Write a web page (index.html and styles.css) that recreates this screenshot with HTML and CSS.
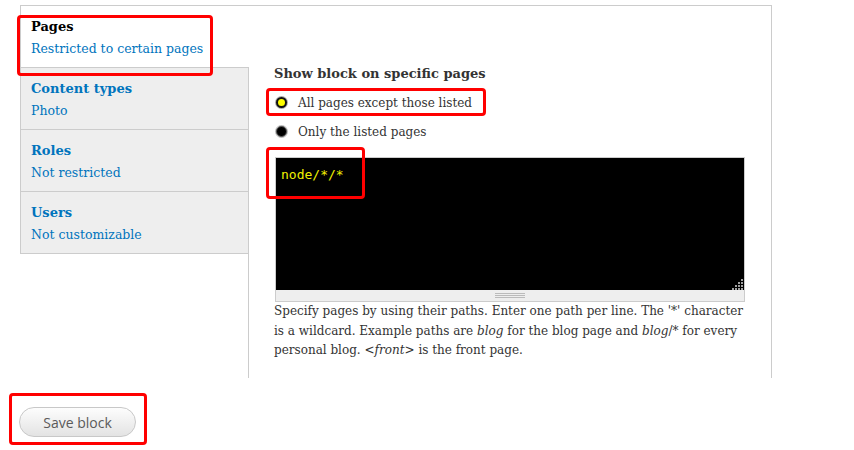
FILE: index.html
```html
<!DOCTYPE html>
<html>
<head>
<meta charset="utf-8">
<link rel="stylesheet" href="styles.css">
</head>
<body>
<div class="page">
  <div class="vtabs">
    <ul class="vt-menu">
      <li class="vt-item selected"><a class="vt-link" href="#"><strong class="vt-title">Pages</strong><span class="vt-summary">Restricted to certain pages</span></a></li>
      <li class="vt-item"><a class="vt-link" href="#"><strong class="vt-title">Content types</strong><span class="vt-summary">Photo</span></a></li>
      <li class="vt-item"><a class="vt-link" href="#"><strong class="vt-title">Roles</strong><span class="vt-summary">Not restricted</span></a></li>
      <li class="vt-item last"><a class="vt-link" href="#"><strong class="vt-title">Users</strong><span class="vt-summary">Not customizable</span></a></li>
    </ul>
    <div class="vt-pane">
      <div class="field-label">Show block on specific pages</div>
      <label class="radio-row"><span class="radio radio-yellow"></span>All pages except those listed</label>
      <label class="radio-row"><span class="radio radio-black"></span>Only the listed pages</label>
      <div class="textarea">
        <div class="ta-body">node/*/*<svg class="resize" width="12" height="12" viewBox="0 0 12 12"><g fill="#a0a0a0"><rect x="9" y="1" width="2" height="2"/><rect x="6" y="4" width="2" height="2"/><rect x="9" y="4" width="2" height="2"/><rect x="3" y="7" width="2" height="2"/><rect x="6" y="7" width="2" height="2"/><rect x="9" y="7" width="2" height="2"/><rect x="0" y="10" width="2" height="2"/><rect x="3" y="10" width="2" height="2"/><rect x="6" y="10" width="2" height="2"/><rect x="9" y="10" width="2" height="2"/></g></svg></div>
        <div class="grippie"><span class="grip"></span></div>
      </div>
      <p class="desc">Specify pages by using their paths. Enter one path per line. The '*' character<br>is a wildcard. Example paths are <em>blog</em> for the blog page and <em>blog</em>/* for every<br>personal blog. <em>&lt;front&gt;</em> is the front page.</p>
    </div>
  </div>
  <div class="actions"><button class="btn" type="button">Save block</button></div>

  <div class="mark mark-1"></div>
  <div class="mark mark-2"></div>
  <div class="mark mark-3"></div>
  <div class="mark mark-4"></div>
</div>
</body>
</html>
```

FILE: styles.css
```css
* { box-sizing: border-box; }
html, body { margin: 0; padding: 0; background: #fff; }
body { width: 854px; height: 450px; overflow: hidden; font-family: "DejaVu Serif", serif; }

.page { position: relative; width: 854px; height: 450px; padding-top: 5px; }

.vtabs {
  display: flex;
  margin-left: 20px;
  width: 752px;
  height: 373px;
  border-top: 1px solid #ccc;
  border-right: 1px solid #ccc;
}

.vt-menu {
  list-style: none;
  margin: 0;
  padding: 0;
  width: 228px;
  flex: none;
  align-self: flex-start;
}
.vt-item {
  height: 62px;
  border-left: 1px solid #ccc;
  border-top: 1px solid #ccc;
  background: #eee;
}
.vt-item.selected {
  height: 61px;
  border-top: 0;
  background: #fff;
  margin-right: -1px;
  position: relative;
  z-index: 1;
}
.vt-item.last { height: 63px; border-bottom: 1px solid #ccc; }

.vt-link {
  display: flex;
  flex-direction: column;
  padding: 10px 0 0 10px;
  text-decoration: none;
  color: #0074bd;
  font-size: 12.5px;
  line-height: 22px;
}
.vt-title { font-weight: bold; font-size: 13px; }
.selected .vt-title { color: #000; }

.vt-pane {
  flex: 1;
  border-left: 1px solid #ccc;
  padding: 53px 0 0 25px;
  color: #333;
  font-size: 12px;
}
.field-label {
  font-weight: bold;
  line-height: 29px;
  font-size: 13px;
}
.radio-row {
  display: flex;
  align-items: center;
  height: 29px;
  padding-left: 2px;
}
.radio {
  width: 11px;
  height: 11px;
  border-radius: 50%;
  margin-right: 11px;
  flex: none;
}
.radio-yellow { background: #ff0; border: 2px solid #111; box-shadow: 0 0 0 1px #aaa; }
.radio-black { background: #000; border: 1px solid #555; box-shadow: 0 0 0 1px #bbb; }

.textarea {
  margin-top: 11px;
  margin-left: 1px;
  width: 470px;
  border: 1px solid #ccc;
}
.ta-body {
  position: relative;
  height: 132px;
  background: #000;
  color: #f0f000;
  font-family: "DejaVu Sans Mono", monospace;
  font-size: 13px;
  line-height: 16px;
  padding: 9px 5px;
  -webkit-font-smoothing: antialiased;
}
.resize { position: absolute; right: 0; bottom: 0; }
.grippie {
  height: 11px;
  background: #eee;
  display: flex;
  justify-content: center;
  align-items: center;
}
.grip {
  width: 30px;
  height: 5px;
  border-top: 1px solid #bbb;
  border-bottom: 1px solid #bbb;
  background: linear-gradient(#eee 0 1px, #bbb 1px 2px, #eee 2px);
}

.desc {
  margin: 0;
  line-height: 19.5px;
  font-size: 12px;
  color: #333;
}
.desc em { font-style: italic; }

.actions { padding: 29px 0 0 19px; }
.btn {
  width: 117px;
  height: 30px;
  border: 1px solid #c8c8c8;
  border-radius: 15px;
  background: linear-gradient(#fdfdfd, #e3e3e3);
  font-family: "Open Sans", sans-serif;
  font-size: 14px;
  color: #5a5a5a;
  padding: 0;
}

.mark {
  position: absolute;
  z-index: 5;
  border: 3px solid #f00;
  border-radius: 4px;
}
.mark-1 { left: 17px; top: 15px; width: 196px; height: 61px; }
.mark-2 { left: 266px; top: 88px; width: 220px; height: 28px; }
.mark-3 { left: 266px; top: 147px; width: 99px; height: 52px; }
.mark-4 { left: 9px; top: 393px; width: 138px; height: 52px; }
```
